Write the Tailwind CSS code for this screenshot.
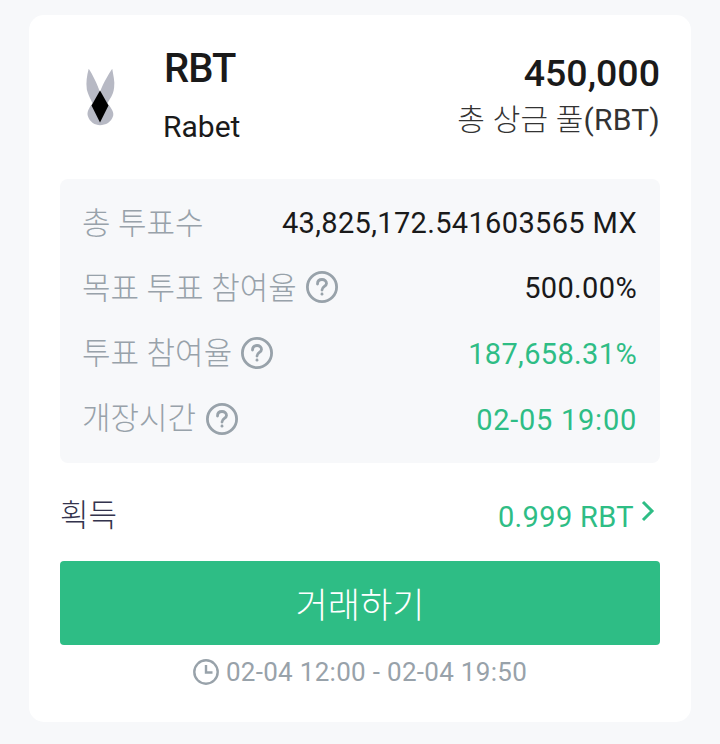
<!DOCTYPE html>
<html><head><meta charset="utf-8"><script src="https://cdn.jsdelivr.net/npm/@tailwindcss/browser@4"></script></head>
<body class="bg-[#f7f8fa] font-['Roboto','Noto_Sans_CJK_KR',sans-serif]">
<div class="w-[720px] h-[744px] pt-[15px] px-[29px]">
<div class="w-[662px] h-[707px] bg-white rounded-[15px] pt-[30px] px-[31px]">
  <div class="flex h-[134px] items-start">
    <div class="w-[104px] pt-[23px] pl-[24px]">
      <svg class="block" width="32" height="58" viewBox="0 0 34 60"><path fill="#b7b9c4" d="M5 0 C3 8 2 14 3 22 C5 30 8 33 9 37 C5 42 3 46 4 50 C6 57 12 60 17 60 C23 60 29 57 31 50 C32 46 29 42 25 37 C27 32 31 29 32 20 C33 13 31 7 30 0 C26 6 20 16 17 25 C14 16 9 6 5 0 Z"/><path fill="#000" d="M17 23 L26 39 L17 57 L8 39 Z"/></svg>
    </div>
    <div class="w-[200px]">
      <div class="text-[40px] leading-[44px] font-medium text-[#1a1a1a] mt-[2px] tracking-[-1px]">RBT</div>
      <div class="text-[30px] leading-[40px] text-[#1a1a1a] mt-[16px] -ml-[1px]">Rabet</div>
    </div>
    <div class="flex-1 text-right">
      <div class="text-[37.5px] leading-[44px] font-medium text-[#1a1a1a] mt-[6px]">450,000</div>
      <div class="text-[30px] leading-[40px] text-[#333] mt-[5px] tracking-[0.2px]"><span class="font-light">총 상금 풀</span>(RBT)</div>
    </div>
  </div>
  <div class="bg-[#f7f8fa] rounded-[8px] h-[284px] px-[23px] pt-[11px] text-[29px] tracking-[0.35px]">
    <div class="flex justify-between items-center h-[66px]"><span class="text-[31px] tracking-normal font-light mt-[2px] -ml-[1px] text-[#98a2aa]">총 투표수</span><span class="text-[#1a1a1a] mt-[2px]">43,825,172.541603565 MX</span></div>
    <div class="flex justify-between items-center h-[66px]"><span class="flex items-center gap-[9px] -ml-[1px] text-[31px] tracking-normal font-light text-[#98a2aa]"><span>목표 투표 참여율</span><svg class="mb-[4px]" width="32" height="32" viewBox="0 0 32 32" fill="none" stroke="#98a2aa" stroke-width="2.8"><circle cx="16" cy="16" r="14.6"/><path stroke-linecap="round" d="M11.5 13 C11.5 10 13.5 8.5 16 8.5 C18.5 8.5 20.5 10 20.5 12.5 C20.5 15.5 16 15.5 16 19"/><path stroke-linecap="round" d="M16 23v.2"/></svg></span><span class="text-[#1a1a1a]">500.00%</span></div>
    <div class="flex justify-between items-center h-[66px]"><span class="flex items-center gap-[9px] -ml-[1px] text-[31px] tracking-normal font-light text-[#98a2aa]"><span class="mb-[2px]">투표 참여율</span><svg class="mb-[4px]" width="32" height="32" viewBox="0 0 32 32" fill="none" stroke="#98a2aa" stroke-width="2.8"><circle cx="16" cy="16" r="14.6"/><path stroke-linecap="round" d="M11.5 13 C11.5 10 13.5 8.5 16 8.5 C18.5 8.5 20.5 10 20.5 12.5 C20.5 15.5 16 15.5 16 19"/><path stroke-linecap="round" d="M16 23v.2"/></svg></span><span class="text-[#2ebd85]">187,658.31%</span></div>
    <div class="flex justify-between items-center h-[66px]"><span class="flex items-center gap-[10px] -ml-[1px] text-[31px] tracking-normal font-light text-[#98a2aa]"><span class="mb-[3px]">개장시간</span><svg class="mb-[4px]" width="32" height="32" viewBox="0 0 32 32" fill="none" stroke="#98a2aa" stroke-width="2.8"><circle cx="16" cy="16" r="14.6"/><path stroke-linecap="round" d="M11.5 13 C11.5 10 13.5 8.5 16 8.5 C18.5 8.5 20.5 10 20.5 12.5 C20.5 15.5 16 15.5 16 19"/><path stroke-linecap="round" d="M16 23v.2"/></svg></span><span class="text-[#2ebd85] tracking-[0.75px]">02-05 19:00</span></div>
  </div>
  <div class="flex justify-between items-center h-[98px]">
    <span class="text-[31px] font-light text-[#33334d] mt-[9px]">획득</span>
    <span class="flex items-start text-[29px] tracking-[0.35px] text-[#2ebd85] mt-[11px] mr-[5px]">0.999 RBT<svg class="ml-[7px] mt-[4px]" width="14" height="22" viewBox="0 0 14 22" fill="none" stroke="#2ebd85" stroke-width="3"><path d="M2 2 L11 11 L2 20"/></svg></span>
  </div>
  <div class="h-[84px] bg-[#2ebd85] rounded-[4px] flex items-center justify-center text-white text-[35px] font-light pt-[8px]">거래하기</div>
  <div class="flex justify-center items-center gap-[7px] mt-[9px] h-[36px] text-[26px] tracking-[0.3px] text-[#98a2aa]">
    <svg width="26" height="26" viewBox="0 0 26 26" fill="none" stroke="#98a2aa" stroke-width="2.4"><circle cx="13" cy="13" r="11.7"/><path d="M13 6v7.5h6.5"/></svg>
    <span>02-04 12:00 - 02-04 19:50</span>
  </div>
</div>
</div>
</body></html>
